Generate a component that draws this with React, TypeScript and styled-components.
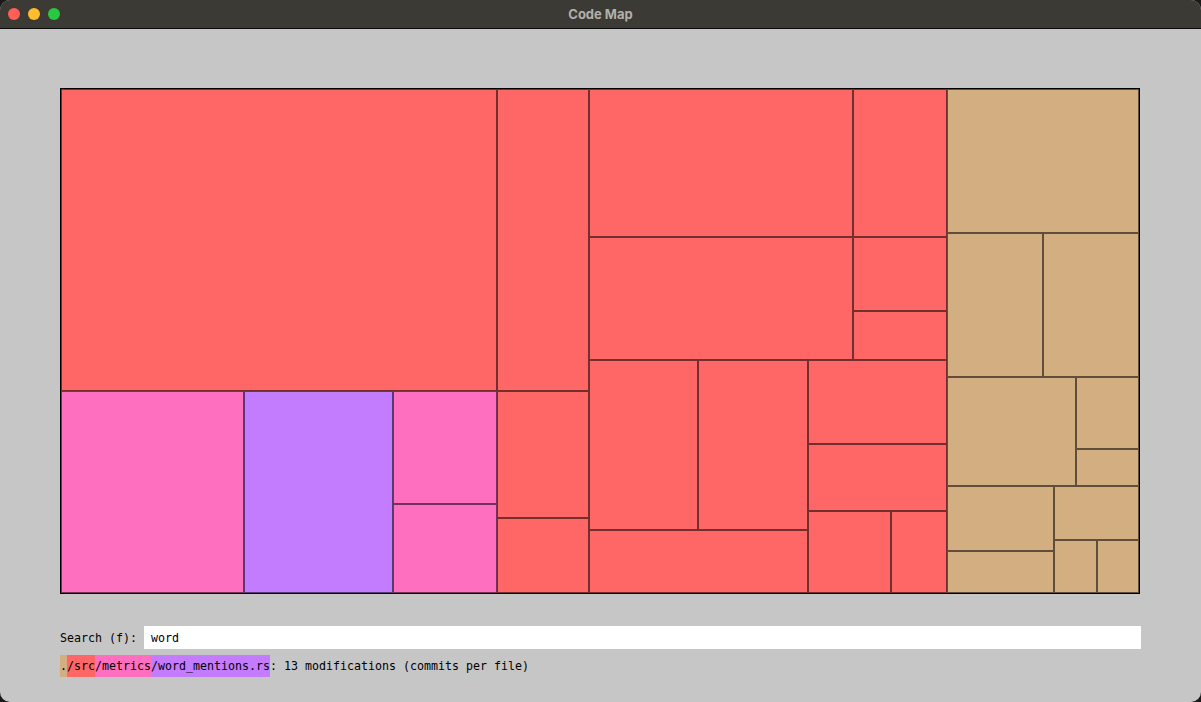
import React from "react";
import styled, { createGlobalStyle } from "styled-components";

const Global = createGlobalStyle`
  html, body { margin: 0; padding: 0; background: #1a1a1a; }
  body { width: 1201px; height: 702px; overflow: hidden; }
  #root { width: 1201px; height: 702px; }
`;

type Kind = "red" | "pink" | "purple" | "tan";
type Node =
  | { leaf: Kind; s: number }
  | { dir: "row" | "col"; s: number; kids: Node[] };

const COLORS: Record<Kind, string> = {
  red: "#ff6666",
  pink: "#ff6fbf",
  purple: "#c47cff",
  tan: "#d3ae81",
};

const L = (leaf: Kind, s: number): Node => ({ leaf, s });
const R = (s: number, kids: Node[]): Node => ({ dir: "row", s, kids });
const C = (s: number, kids: Node[]): Node => ({ dir: "col", s, kids });

const tree: Node = R(1078, [
  C(436, [
    L("red", 302),
    R(202, [
      L("pink", 183),
      L("purple", 149),
      C(104, [L("pink", 113), L("pink", 89)]),
    ]),
  ]),
  C(92, [L("red", 302), L("red", 127), L("red", 75)]),
  C(358, [
    R(271, [
      C(264, [L("red", 148), L("red", 123)]),
      C(94, [L("red", 148), L("red", 74), L("red", 49)]),
    ]),
    R(233, [
      C(219, [R(170, [L("red", 109), L("red", 110)]), L("red", 63)]),
      C(139, [
        L("red", 84),
        L("red", 67),
        R(82, [L("red", 83), L("red", 56)]),
      ]),
    ]),
  ]),
  C(192, [
    L("tan", 144),
    R(144, [L("tan", 96), L("tan", 96)]),
    R(109, [L("tan", 129), C(63, [L("tan", 72), L("tan", 37)])]),
    R(107, [
      C(107, [L("tan", 65), L("tan", 42)]),
      C(85, [L("tan", 54), R(53, [L("tan", 43), L("tan", 42)])]),
    ]),
  ]),
]);

const Window = styled.div`
  width: 1201px;
  height: 702px;
  border-radius: 10px;
  overflow: hidden;
  background: #c6c6c6;
  display: flex;
  flex-direction: column;
`;

const TitleBar = styled.div`
  height: 28px;
  flex: 0 0 28px;
  background: #3c3a35;
  border-bottom: 1px solid #0c0c0c;
  display: flex;
  align-items: center;
  position: relative;
`;

const Lights = styled.div`
  display: flex;
  gap: 8px;
  padding-left: 8px;
`;

const Light = styled.span<{ $c: string }>`
  width: 12px;
  height: 12px;
  border-radius: 50%;
  background: ${(p) => p.$c};
`;

const Title = styled.div`
  position: absolute;
  left: 0;
  right: 0;
  text-align: center;
  color: #b3afa9;
  font-family: "Inter", "Open Sans", sans-serif;
  font-weight: 700;
  font-size: 13px;
  pointer-events: none;
`;

const Body = styled.div`
  flex: 1;
  padding: 59px 60px 0 60px;
  display: flex;
  flex-direction: column;
`;

const Map = styled.div`
  width: 1078px;
  height: 504px;
  border: 1px solid #000;
  display: flex;
`;

const Group = styled.div<{ $dir: "row" | "col" }>`
  display: flex;
  flex-direction: ${(p) => (p.$dir === "row" ? "row" : "column")};
  min-width: 0;
  min-height: 0;
`;

const Cell = styled.div<{ $kind: Kind }>`
  background: ${(p) => COLORS[p.$kind]};
  box-sizing: border-box;
  border: 1px solid rgba(0, 0, 0, 0.55);
  min-width: 0;
  min-height: 0;
`;

const renderNode = (n: Node, key: number): React.ReactNode => {
  const style = { flex: `0 0 ${n.s}px` };
  if ("leaf" in n) return <Cell key={key} $kind={n.leaf} style={style} />;
  return (
    <Group key={key} $dir={n.dir} style={style}>
      {n.kids.map(renderNode)}
    </Group>
  );
};

const Mono = `"DejaVu Sans Mono", "Liberation Mono", monospace`;

const SearchRow = styled.div`
  margin-top: 32px;
  display: flex;
  align-items: center;
  font-family: ${Mono};
  font-size: 11.63px;
  color: #000;
`;

const Label = styled.span`
  width: 84px;
  flex: 0 0 84px;
`;

const Input = styled.div`
  flex: 1;
  height: 23px;
  background: #fff;
  display: flex;
  align-items: center;
  padding-left: 7px;
`;

const InfoRow = styled.div`
  margin-top: 6px;
  height: 22px;
  display: flex;
  align-items: center;
  font-family: ${Mono};
  font-size: 11.63px;
  color: #000;
  white-space: pre;
`;

const Seg = styled.span<{ $kind: Kind }>`
  background: ${(p) => COLORS[p.$kind]};
  height: 22px;
  line-height: 22px;
`;

export default function App() {
  return (
    <>
      <Global />
      <Window>
        <TitleBar>
          <Lights>
            <Light $c="#ff5f57" />
            <Light $c="#febc2e" />
            <Light $c="#28c840" />
          </Lights>
          <Title>Code Map</Title>
        </TitleBar>
        <Body>
          <Map>{tree.kids.map(renderNode)}</Map>
          <SearchRow>
            <Label>Search (f):</Label>
            <Input>word</Input>
          </SearchRow>
          <InfoRow>
            <Seg $kind="tan">.</Seg>
            <Seg $kind="red">/src</Seg>
            <Seg $kind="pink">/metrics</Seg>
            <Seg $kind="purple">/word_mentions.rs</Seg>
            <span>: 13 modifications (commits per file)</span>
          </InfoRow>
        </Body>
      </Window>
    </>
  );
}
